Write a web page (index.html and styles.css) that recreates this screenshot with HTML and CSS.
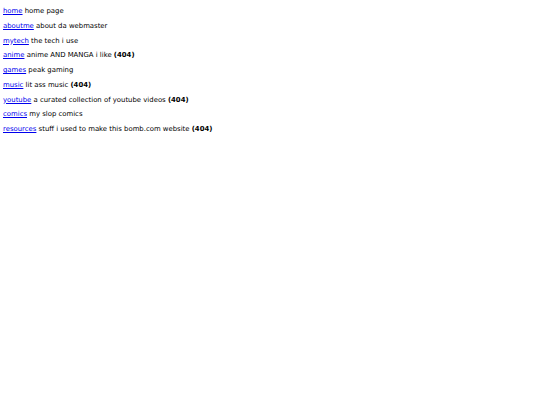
FILE: index.html
```html
<!DOCTYPE html>
<html lang="en">
<head>
    <meta charset="UTF-8">
    <meta name="viewport" content="width=device-width, initial-scale=1.0">
    <title>home</title>
    <link rel="stylesheet" href="styles.css">
</head>
<body>
    <div class="links">
        <p><a href="#">home</a> home page</p>
        <p><a href="#">aboutme</a> about da webmaster</p>
        <p><a href="#">mytech</a> the tech i use</p>
        <p><a href="#">anime</a> anime AND MANGA i like <b>(404)</b></p>
        <p><a href="#">games</a> peak gaming</p>
        <p><a href="#">music</a> lit ass music <b>(404)</b></p>
        <p><a href="#">youtube</a> a curated collection of youtube videos <b>(404)</b></p>
        <p><a href="#">comics</a> my slop comics</p>
        <p><a href="#">resources</a> stuff i used to make this bomb.com website <b>(404)</b></p>
    </div>
</body>
</html>
```

FILE: styles.css
```css
body {
    font-family: "DejaVu Sans", Verdana, sans-serif;
    font-size: 6.9px;
    color: #000;
    background: #fff;
    margin: 0;
    padding: 4px 3px;
}

.links p {
    margin: 0;
    line-height: 14.75px;
}

.links a {
    color: #0000ee;
}
```
